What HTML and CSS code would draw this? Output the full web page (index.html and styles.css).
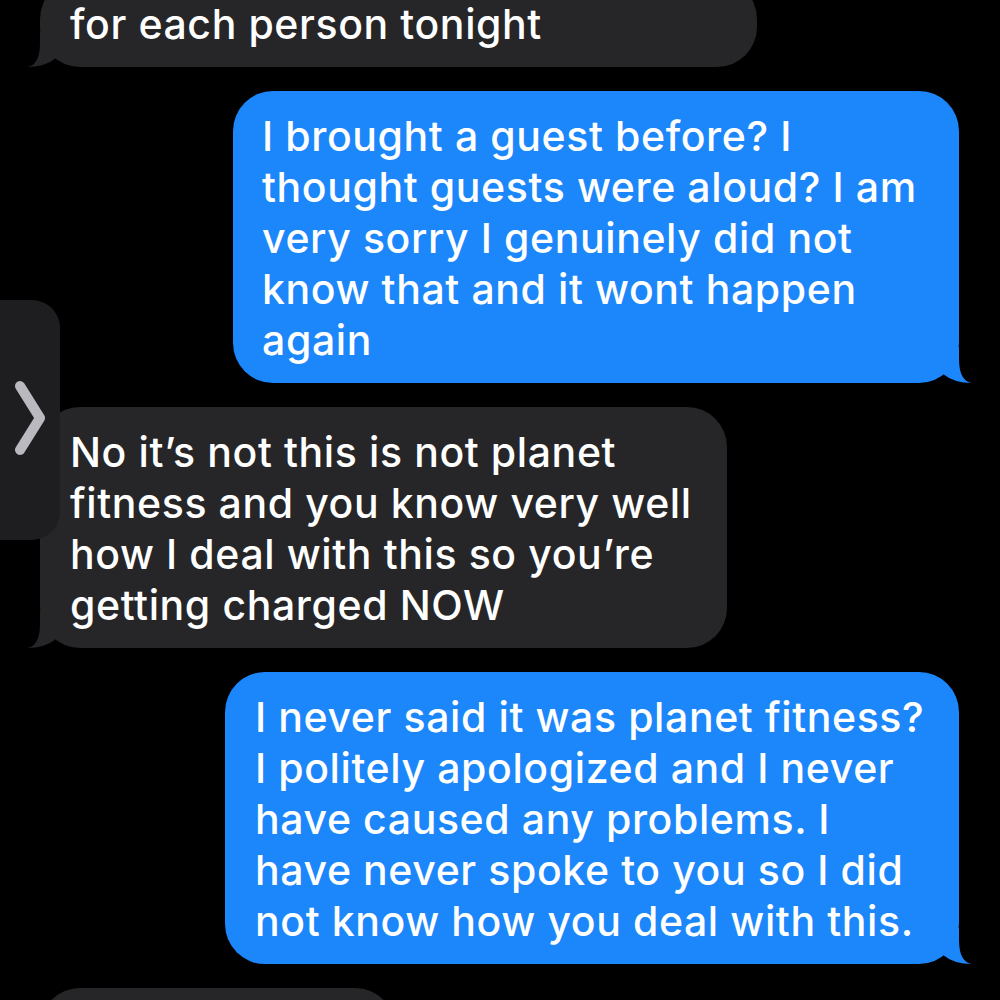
FILE: index.html
```html
<!DOCTYPE html>
<html lang="en">
<head>
<meta charset="utf-8">
<title>Messages</title>
<link rel="stylesheet" href="styles.css">
</head>
<body>
<main class="thread">
  <div class="bubble them w-top first">for each person tonight</div>
  <div class="bubble me w-me1">I brought a guest before? I<br>thought guests were aloud? I am<br>very sorry I genuinely did not<br>know that and it wont happen<br>again</div>
  <div class="bubble them w-them2">No it’s not this is not planet<br>fitness and you know very well<br>how I deal with this so you’re<br>getting charged NOW</div>
  <div class="bubble me w-me2">I never said it was planet fitness?<br>I politely apologized and I never<br>have caused any problems. I<br>have never spoke to you so I did<br>not know how you deal with this.</div>
  <div class="bubble them w-last">&nbsp;</div>
</main>
<aside class="side-tab">
  <svg class="chevron" width="32" height="76" viewBox="0 0 32 76" aria-hidden="true">
    <path d="M6 6 L26 38 L6 70" fill="none" stroke="#b9b9bf" stroke-width="10" stroke-linecap="round" stroke-linejoin="round"/>
  </svg>
</aside>
</body>
</html>
```

FILE: styles.css
```css
html, body {
  margin: 0;
  padding: 0;
  background: #000;
}

body {
  width: 1000px;
  height: 1000px;
  overflow: hidden;
  position: relative;
  font-family: Inter, "Noto Sans", "Liberation Sans", sans-serif;
}

.thread {
  display: flex;
  flex-direction: column;
  gap: 24px;
  padding: 0 41px 0 40px;
}

.bubble {
  position: relative;
  box-sizing: border-box;
  padding: 20px 20px 17px 30px;
  border-radius: 40px;
  font-size: 41px;
  font-weight: 500;
  line-height: 51px;
  letter-spacing: 0.6px;
  color: #fff;
  white-space: nowrap;
}

.first {
  margin-top: -21px;
}

.them {
  align-self: flex-start;
  background: #262628;
}

.me {
  align-self: flex-end;
  background: #1c86fb;
}

.me::after,
.them::after {
  content: "";
  position: absolute;
  bottom: 0;
  width: 44px;
  height: 36px;
  background: inherit;
}

.me::after {
  right: -14px;
  clip-path: path("M 30 0 L 30 12 Q 30 34 43 36 Q 25 36 14 27 L 14 0 Z");
}

.them::after {
  left: -14px;
  clip-path: path("M 14 0 L 14 12 Q 14 34 1 36 Q 19 36 30 27 L 30 0 Z");
}

.w-last::after {
  display: none;
}

.w-top { width: 717px; }
.w-me1 { width: 726px; padding-left: 29px; }
.w-them2 { width: 687px; }
.w-me2 { width: 734px; padding-left: 30px; }
.w-last { width: 355px; }

.side-tab {
  position: absolute;
  left: -30px;
  top: 300px;
  width: 90px;
  height: 240px;
  border-radius: 28px;
  background: #1e1e20;
  display: flex;
  align-items: center;
  box-sizing: border-box;
  padding-left: 44px;
}

.chevron {
  display: block;
  margin-top: -4px;
}
```
